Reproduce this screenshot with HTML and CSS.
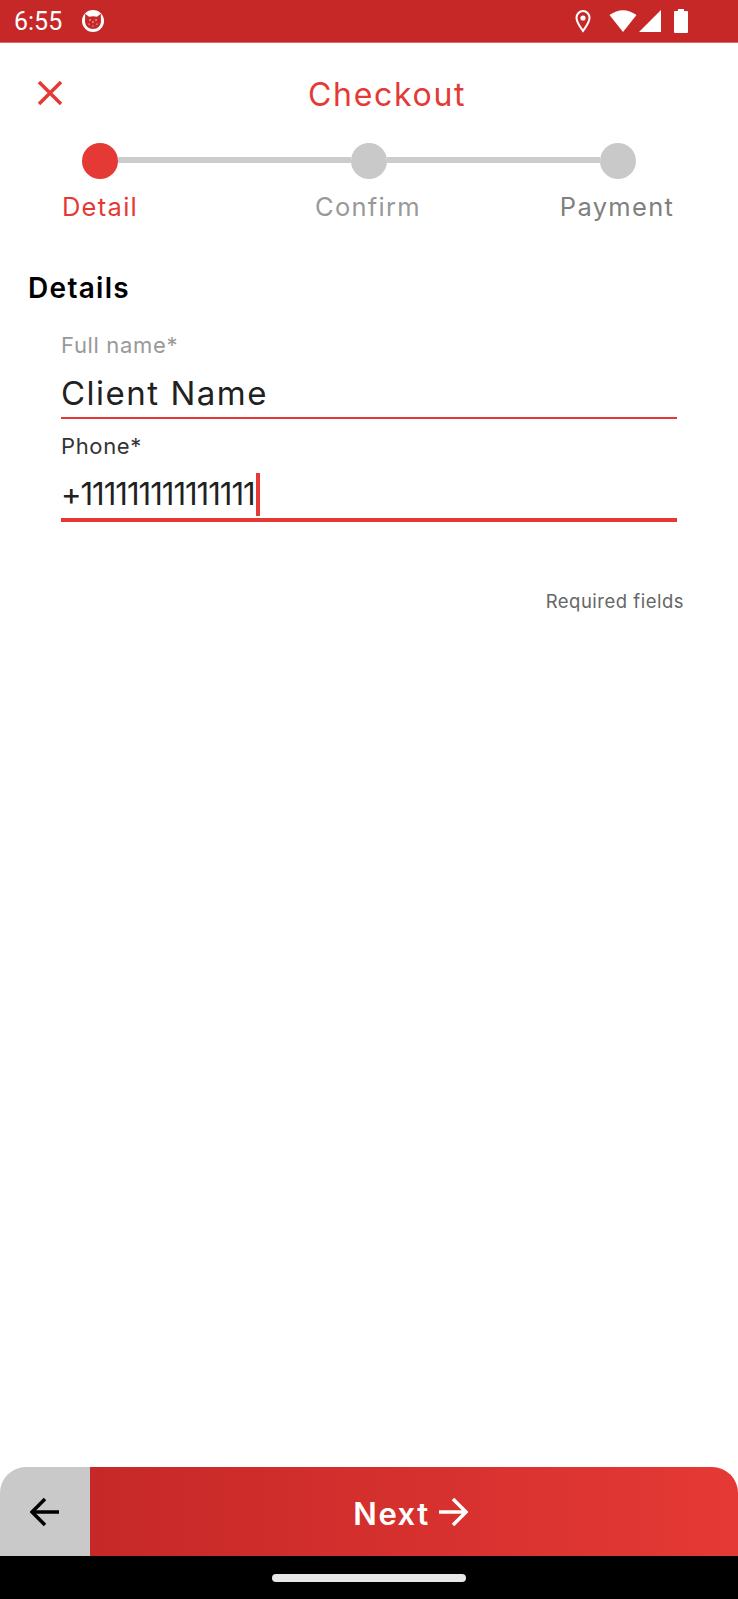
FILE: index.html
```html
<!DOCTYPE html>
<html lang="en">
<head>
<meta charset="utf-8">
<title>Checkout</title>
<link rel="stylesheet" href="styles.css">
</head>
<body>
<div class="screen">
  <header class="status">
    <span class="time">6:55</span>
    <svg class="cat" width="24" height="24" viewBox="0 0 24 24"><circle cx="12" cy="12" r="11" fill="#fff"/><path d="M4.200 4.800 L8 7.800 Q12 6.600 16 7.800 L19.800 4.800 L20 13 Q19 19.800 12 20 Q5 19.800 4 13 Z" fill="#C62828"/><g fill="#fff"><circle cx="9" cy="11" r=".7"/><circle cx="12" cy="13" r=".7"/><circle cx="15" cy="11" r=".7"/><circle cx="8" cy="15" r=".6"/><circle cx="16" cy="15" r=".6"/><circle cx="12" cy="17" r=".6"/></g></svg>
    <span class="status-space"></span>
    <svg class="pin" width="16" height="24" viewBox="0 0 16 24"><path d="M8 22 C5 17.500 1.500 13.500 1.500 8.800 A6.500 6.800 0 0 1 14.500 8.800 C14.500 13.500 11 17.500 8 22 Z" fill="none" stroke="#fff" stroke-width="2"/><circle cx="8" cy="9" r="2.600" fill="#fff"/></svg>
    <svg class="wifi" width="28" height="24" viewBox="0 0 28 24"><path d="M0.500 6 Q14 -3.500 27.500 6 L14 23 Z" fill="#fff"/></svg>
    <svg class="signal" width="22" height="22" viewBox="0 0 22 22"><path d="M22 0 V22 H0 Z" fill="#fff"/></svg>
    <svg class="battery" width="14" height="24" viewBox="0 0 14 24"><path d="M4 0 H10 V2 H13 Q14 2 14 3 V23 Q14 24 13 24 H1 Q0 24 0 23 V3 Q0 2 1 2 H4 Z" fill="#fff"/></svg>
  </header>

  <main class="content">
    <div class="titlebar">
      <svg class="close" width="26" height="26" viewBox="0 0 26 26"><path d="M2 2 L24 24 M24 2 L2 24" stroke="#E53935" stroke-width="3.500" fill="none"/></svg>
      <h1 class="title">Checkout</h1>
    </div>

    <div class="track">
      <span class="dot dot-on"></span>
      <span class="bar bar-a"></span>
      <span class="dot"></span>
      <span class="bar bar-b"></span>
      <span class="dot"></span>
    </div>
    <div class="labels">
      <span class="label label-on">Detail</span>
      <span class="label label-mid">Confirm</span>
      <span class="label label-end">Payment</span>
    </div>

    <h2 class="section">Details</h2>

    <div class="field field-name">
      <div class="caption caption-idle">Full name*</div>
      <div class="value value-name">Client Name</div>
    </div>
    <div class="field field-phone">
      <div class="caption">Phone*</div>
      <div class="value value-phone"><span class="digits">+111111111111111</span><span class="cursor"></span></div>
    </div>

    <p class="note">Required fields</p>
  </main>

  <footer class="actions">
    <div class="back">
      <svg width="30" height="30" viewBox="0 0 30 30"><path d="M29 15 H2 M15 2 L2 15 L15 28" fill="none" stroke="#000" stroke-width="3.500"/></svg>
    </div>
    <div class="next">
      <span class="next-text">Next</span>
      <svg width="30" height="30" viewBox="0 0 30 30"><path d="M1 15 H28 M15 2 L28 15 L15 28" fill="none" stroke="#fff" stroke-width="3.500"/></svg>
    </div>
  </footer>
  <div class="navbar"><span class="pill"></span></div>
</div>
</body>
</html>
```
FILE: styles.css
```css
* { box-sizing: border-box; }
html, body { margin: 0; padding: 0; background: #fff; }
body { font-family: "Inter", "Liberation Sans", sans-serif; }
.screen { width: 738px; height: 1599px; display: flex; flex-direction: column; overflow: hidden; }

.status { height: 43px; flex: none; display: flex; align-items: center; padding: 0 50px 1px 14px; background: #C62828; border-bottom: 1px solid #DF6A6A; color: #fff; }
.time { font-family: "Roboto", sans-serif; font-size: 25px; width: 67px; padding-top: 1px; }
.status-space { flex: 1; }
.cat { display: block; }
.pin { display: block; margin-right: 18px; }
.wifi { display: block; margin-right: 2px; }
.signal { display: block; margin-right: 13px; }
.battery { display: block; }

.content { flex: 1; display: flex; flex-direction: column; }
.titlebar { display: flex; align-items: center; height: 64px; margin-top: 19px; padding-left: 37px; }
.close { display: block; flex: none; margin-top: -2px; }
.title { margin: 0 0 0 245px; font-size: 32px; font-weight: 400; letter-spacing: 1.7px; color: #E53935; white-space: nowrap; }

.track { display: flex; align-items: flex-start; padding-left: 82px; margin-top: 17px; }
.dot { width: 36px; height: 36px; border-radius: 50%; background: #C9C9C9; flex: none; }
.dot-on { background: #E53935; }
.bar { height: 6px; margin-top: 14px; background: #CCCCCC; flex: none; }
.bar-a { width: 232.500px; }
.bar-b { width: 213px; }

.labels { display: grid; grid-template-columns: 200px 336px 162px; margin-top: 13px; font-size: 25.500px; line-height: 30px; }
.label { text-align: center; white-space: nowrap; color: #999; letter-spacing: 1.300px; }
.label-on { color: #E53935; }
.label-end { color: #808080; }

.section { margin: 50px 0 0 28px; font-size: 28px; line-height: 32px; font-weight: 600; letter-spacing: 1.300px; color: #000; }

.field { margin: 0 61px; }
.field-name { margin-top: 28px; border-bottom: 2px solid #E53935; height: 87px; }
.field-phone { margin-top: 14px; border-bottom: 4px solid #E53935; height: 89px; }
.caption { font-size: 22px; line-height: 26px; letter-spacing: 0.650px; color: #333; }
.caption-idle { color: #999; }
.value { color: #212121; white-space: nowrap; }
.value-name { font-size: 33px; line-height: 40px; margin-top: 15px; letter-spacing: 1.500px; }
.value-phone { display: flex; align-items: center; font-size: 31px; line-height: 44px; margin-top: 13px; }
.digits { letter-spacing: -1px; padding-right: 1px; }
.cursor { width: 4px; height: 43px; background: #E53935; flex: none; }

.note { margin: 68px 54px 0 0; text-align: right; font-size: 18.500px; line-height: 22px; letter-spacing: 0.500px; color: #666; }

.actions { height: 89px; flex: none; display: flex; }
.back { width: 90px; flex: none; display: flex; align-items: center; justify-content: center; background: #C9C9C9; border-top-left-radius: 26px; }
.next { flex: 1; display: flex; align-items: center; justify-content: center; gap: 8px; padding-right: 7px; background: linear-gradient(to right, #C62828, #E53935); border-top-right-radius: 26px; color: #fff; }
.next-text { font-size: 31px; font-weight: 600; letter-spacing: 1.500px; margin-top: 3px; }

.navbar { height: 43px; flex: none; background: #000; display: flex; justify-content: center; padding-top: 18px; }
.pill { width: 194px; height: 8px; border-radius: 4px; background: #E8E8E8; }
```
